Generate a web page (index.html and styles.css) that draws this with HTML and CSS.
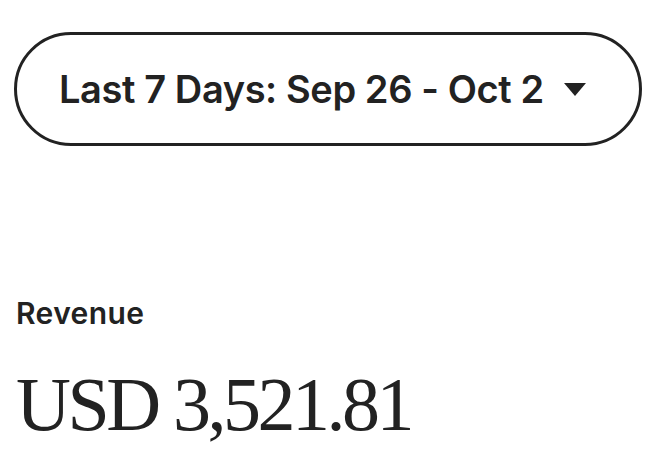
FILE: index.html
```html
<!DOCTYPE html>
<html lang="en">
<head>
    <meta charset="UTF-8">
    <meta name="viewport" content="width=device-width, initial-scale=1.0">
    <title>Stats</title>
    <link rel="stylesheet" href="styles.css">
</head>
<body>
    <div class="page">
        <button type="button" class="range-btn">
            <span class="range-label">Last 7 Days: Sep 26 - Oct 2</span>
            <svg class="caret" width="22" height="13" viewBox="0 0 22 13" aria-hidden="true">
                <path d="M0 0 H22 L11 13 Z" fill="#222222"/>
            </svg>
        </button>

        <div class="stat">
            <h2 class="stat-title">Revenue</h2>
            <p class="stat-value">USD 3,521.81</p>
        </div>
    </div>
</body>
</html>
```

FILE: styles.css
```css
/* stats panel */
body {
    margin: 0;
    padding: 0;
    background: #ffffff;
    color: #222222;
    font-family: Inter, "Noto Sans", Arial, sans-serif;
}

.page {
    display: flex;
    flex-direction: column;
    align-items: flex-start;
    padding: 32px 22px 0 14px;
}

.range-btn {
    display: flex;
    align-items: center;
    gap: 20px;
    width: 628px;
    height: 114px;
    padding: 0 0 0 42px;
    border: 3px solid #222222;
    border-radius: 57px;
    background: #ffffff;
    color: #222222;
    font-family: inherit;
    font-size: 38px;
    font-weight: 600;
    letter-spacing: -0.4px;
    cursor: pointer;
}

.range-label {
    white-space: nowrap;
}

.caret {
    flex: none;
}

.stat {
    margin-top: 152px;
    padding-left: 2px;
}

.stat-title {
    margin: 0;
    font-size: 30px;
    font-weight: 600;
    letter-spacing: 0.4px;
    line-height: 1;
}

.stat-value {
    margin: 38px 0 0;
    font-family: "Liberation Serif", "Times New Roman", serif;
    font-size: 76px;
    font-weight: 400;
    letter-spacing: -3.5px;
    line-height: 1;
}
```
